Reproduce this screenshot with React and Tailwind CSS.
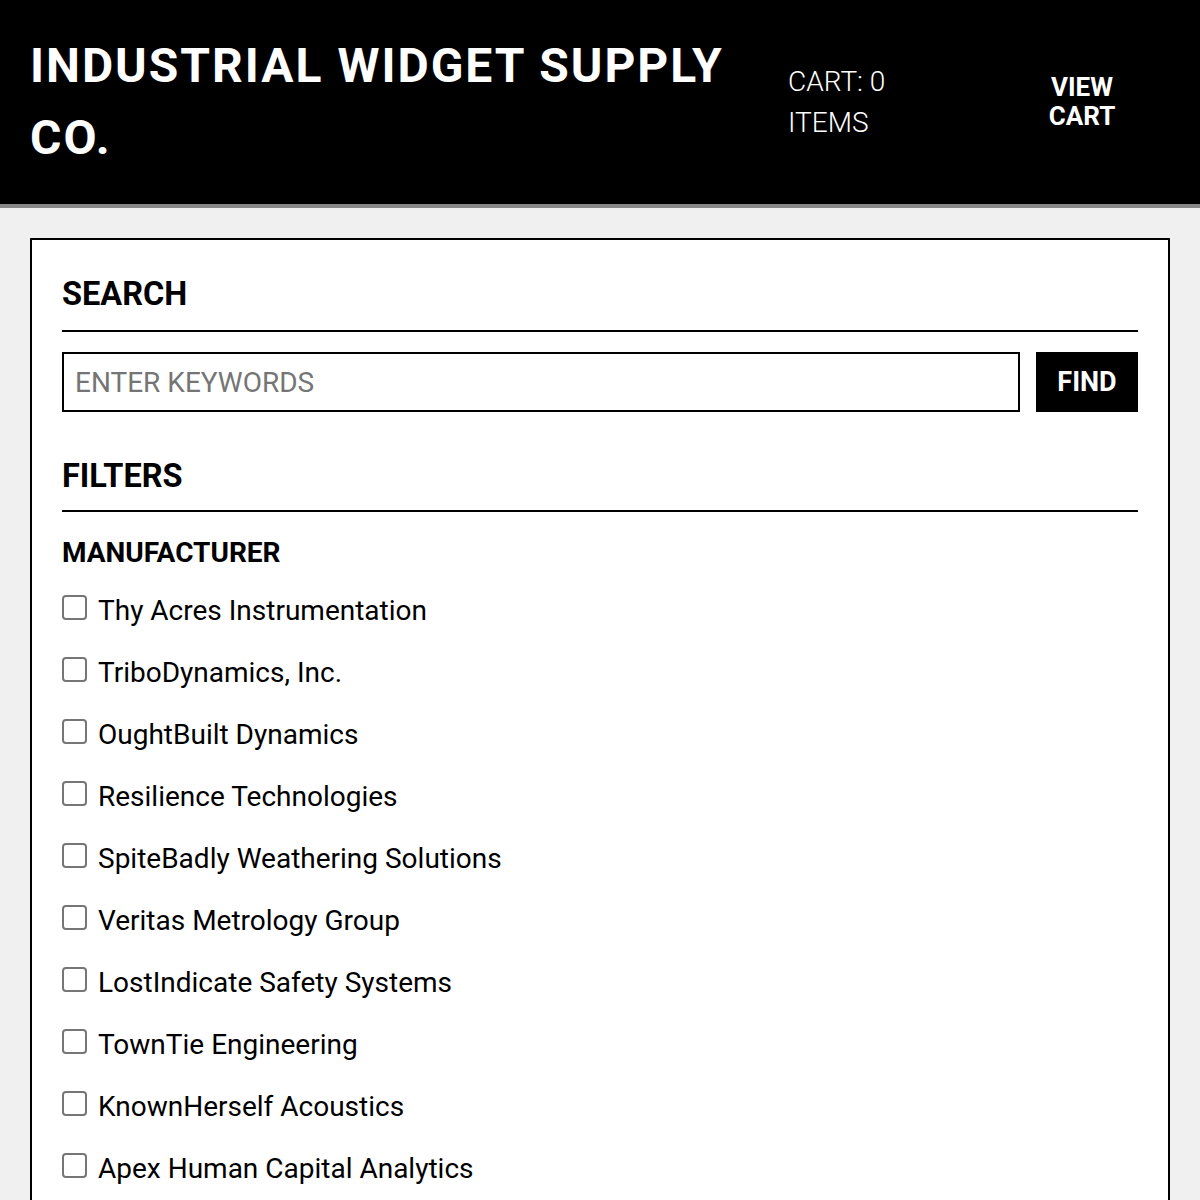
import React from "react";

const makers = [
  "Thy Acres Instrumentation",
  "TriboDynamics, Inc.",
  "OughtBuilt Dynamics",
  "Resilience Technologies",
  "SpiteBadly Weathering Solutions",
  "Veritas Metrology Group",
  "LostIndicate Safety Systems",
  "TownTie Engineering",
  "KnownHerself Acoustics",
  "Apex Human Capital Analytics",
];

export default function App() {
  return (
    <div className="min-h-screen bg-[#f0f0f0] font-['Roboto',sans-serif] text-black">
      <header className="bg-black border-b-4 border-[#888888] px-[30px] py-[30px] flex items-center">
        <h1 className="w-[730px] text-[48px] leading-[72px] font-bold tracking-[2px] text-white">
          INDUSTRIAL WIDGET SUPPLY CO.
        </h1>
        <div className="ml-[28px] w-[150px] text-[28px] leading-[41px] font-light text-white">
          CART: 0 ITEMS
        </div>
        <button className="ml-[110px] w-[68px] text-[26px] leading-[29px] font-bold text-white text-center">
          VIEW CART
        </button>
      </header>
      <main className="px-[30px] pt-[30px]">
        <div className="bg-white border-2 border-black px-[30px] pt-[30px] pb-[30px]">
          <h2 className="text-[32.5px] leading-[48px] font-bold border-b-2 border-black pb-[12px]">
            SEARCH
          </h2>
          <div className="flex gap-[16px] mt-[20px]">
            <input
              type="text"
              placeholder="ENTER KEYWORDS"
              className="flex-1 h-[60px] border-2 border-black px-[11px] text-[28px] placeholder:text-[#757575] outline-none"
            />
            <button className="w-[102px] h-[60px] bg-black text-white text-[27px] font-bold">
              FIND
            </button>
          </div>
          <h2 className="mt-[40px] text-[32.5px] leading-[48px] font-bold border-b-2 border-black pb-[10px]">
            FILTERS
          </h2>
          <h3 className="mt-[20px] text-[28px] leading-[42px] font-bold">MANUFACTURER</h3>
          <ul className="mt-[16px] flex flex-col gap-[20px]">
            {makers.map((m) => (
              <li key={m} className="flex items-start">
                <input
                  type="checkbox"
                  className="appearance-none w-[25px] h-[25px] mt-[5px] border-2 border-[#767676] rounded-[4px] bg-white shrink-0"
                />
                <span className="ml-[11px] text-[28px] leading-[42px]">{m}</span>
              </li>
            ))}
          </ul>
        </div>
      </main>
    </div>
  );
}
